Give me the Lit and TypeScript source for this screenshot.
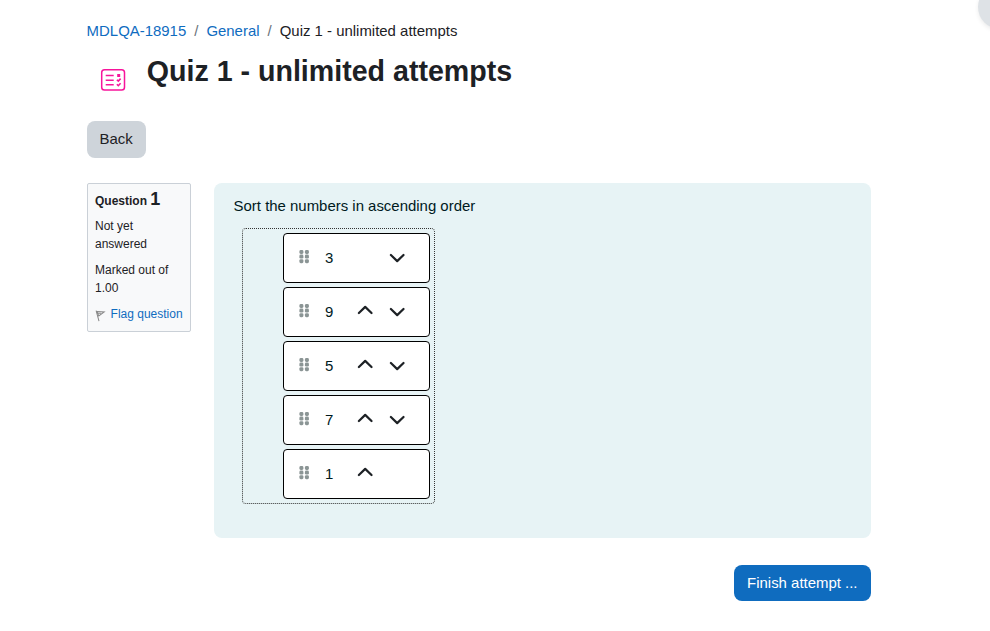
import {LitElement, html, svg, css, nothing} from 'lit';
import {customElement, property, state} from 'lit/decorators.js';

const quizIcon = svg`
  <svg width="26" height="24" viewBox="0 0 26 24" fill="none" stroke="#f7149b">
    <rect x="1.7" y="1.8" width="22.8" height="20.2" rx="2.8" stroke-width="1.5"/>
    <path d="M5.7 7.5h8M5.7 12.2h8M5.7 16.7h8" stroke-width="1.5"/>
    <rect x="17.2" y="6" width="3" height="3" fill="#f7149b" stroke="none"/>
    <path d="M16.9 11.7l1.4 1.4 2.3-2.5M16.9 16.3l1.4 1.4 2.3-2.5" stroke-width="1.6"/>
  </svg>`;

const flagIcon = svg`
  <svg width="12" height="12" viewBox="0 0 12 12" fill="none" stroke="#888" stroke-width="1.1">
    <path d="M1.2 .3L4.2 11.5"/>
    <path d="M2 1.3L9.7 1.7 4 6z"/>
    <path d="M2.4 3L6.4 3.2"/>
  </svg>`;

const gripIcon = svg`
  <svg width="10" height="14" viewBox="0 0 10 14" fill="#8b9595">
    ${[0.4, 5.9].map(x => [0, 4.6, 9.2].map(y => svg`
      <rect x=${x} y=${y} width="4" height="4" rx="1.4"/>`))}
  </svg>`;

const chevron = (d: string) => svg`
  <svg width="16" height="10" viewBox="0 0 16 10" fill="none" stroke="#1d2125"
    stroke-width="2.2" stroke-linecap="round" stroke-linejoin="round"><path d=${d}/></svg>`;

@customElement('sort-item')
export class SortItem extends LitElement {

    static styles = css`
      :host {
        display: block;
      }

      .item {
        box-sizing: border-box;
        width: 147px;
        height: 50px;
        display: grid;
        grid-template-columns: 10px 32px 32px 32px;
        align-items: center;
        padding-left: 15px;
        background: #fff;
        border: 1px solid #000;
        border-radius: 4px;
      }

      .grip {
        display: flex;
        padding-bottom: 3px;
      }

      .label {
        padding-left: 16.4px;
        line-height: 22px;
      }

      .move {
        display: flex;
        width: 100%;
        justify-content: flex-end;
        padding: 0;
        border: 0;
        background: none;
      }

      .up {
        padding-bottom: 4px;
      }
    `

    @property() label = '';
    @property({type: Boolean}) first = false;
    @property({type: Boolean}) last = false;

    move(step: number) {
        this.dispatchEvent(new CustomEvent('move', {detail: step}));
    }

    render() {
        return html`
            <div class="item">
                <span class="grip">${gripIcon}</span>
                <span class="label">${this.label}</span>
                <span>
                    ${this.first ? nothing : html`
                        <button class="move up" aria-label="Move up" @click=${() => this.move(-1)}>${chevron('M1.9 8L8.2 1.9 14.5 8')}</button>`}
                </span>
                <span>
                    ${this.last ? nothing : html`
                        <button class="move" aria-label="Move down" @click=${() => this.move(1)}>${chevron('M1.9 2L8.2 8.1 14.5 2')}</button>`}
                </span>
            </div>
        `
    }
}

@customElement('question-info')
export class QuestionInfo extends LitElement {

    static styles = css`
      .info {
        box-sizing: border-box;
        width: 104px;
        height: 149px;
        padding: 5px 7px 5px 7.4px;
        font-size: 12px;
        line-height: 18px;
        background: #f8f9fa;
        border: 1px solid #cad0d7;
        border-radius: 2px;
      }

      .number {
        margin: 0 0 6px;
        font-size: 12px;
        line-height: 20px;
      }

      .number span {
        font-size: 18px;
      }

      .info div {
        margin-bottom: 8px;
      }

      .flag {
        display: flex;
        align-items: center;
        gap: 4.2px;
        color: #0f6cbf;
        text-decoration: none;
        white-space: nowrap;
      }

      .flag svg {
        margin-top: 3px;
      }
    `

    render() {
        return html`
            <div class="info">
                <h3 class="number">Question <span>1</span></h3>
                <div>Not yet answered</div>
                <div>Marked out of 1.00</div>
                <a class="flag" href="#">${flagIcon}Flag question</a>
            </div>
        `
    }
}

@customElement('app-root')
export class AppRoot extends LitElement {

    static styles = css`
      :host {
        display: block;
        position: relative;
        box-sizing: border-box;
        height: 631px;
        padding: 20px 119px 0 86.6px;
        overflow: hidden;
        background: #fff;
        color: #1d2125;
        font-family: "Liberation Sans", Arial, sans-serif;
        font-size: 14.94px;
        line-height: 22px;
      }

      .drawer-toggle {
        position: absolute;
        top: -15px;
        right: -32px;
        width: 44px;
        height: 44px;
        border-radius: 50%;
        background: #dee2e6;
        box-shadow: 0 2px 4px rgba(0, 0, 0, .08);
      }

      .breadcrumb {
        display: flex;
        gap: 8px;
        color: #6a737b;
      }

      .breadcrumb a {
        color: #0f6cbf;
        text-decoration: none;
      }

      .current {
        color: #1d2125;
      }

      .header {
        display: flex;
        height: 79px;
      }

      .activity-icon {
        padding: 26px 20.8px 0 13.4px;
      }

      h1 {
        margin: 12px 0 0;
        font-size: 28.6px;
        line-height: 34px;
      }

      .btn {
        box-sizing: border-box;
        padding: 0 12px;
        border: 1px solid transparent;
        border-radius: 8px;
        font: inherit;
        line-height: 34px;
      }

      .back {
        height: 37px;
        padding-bottom: 1px;
        background: #ced4da;
        color: #1d2125;
      }

      .question {
        display: flex;
        gap: 23px;
        margin-top: 25px;
      }

      .formulation {
        box-sizing: border-box;
        flex: 1;
        height: 355px;
        padding: 12px 20px 0;
        border-radius: 8px;
        background: #e7f3f5;
        color: #001a1e;
      }

      .sortable {
        box-sizing: border-box;
        width: 193px;
        height: 276px;
        display: grid;
        gap: 4px;
        align-content: start;
        margin: 11px 0 0 8px;
        padding: 4px 0 0 40px;
        border: 1px dotted #333;
        border-radius: 4px;
      }

      .actions {
        display: flex;
        justify-content: flex-end;
        margin-top: 27px;
      }

      .finish {
        height: 36px;
        padding: 0 12.5px;
        background: #0f6cbf;
        color: #fff;
      }
    `

    @state() items = ['3', '9', '5', '7', '1'];

    move(index: number, step: number) {
        const items = [...this.items];
        [items[index], items[index + step]] = [items[index + step], items[index]];
        this.items = items;
    }

    render() {
        return html`
            <div class="drawer-toggle"></div>

            <nav class="breadcrumb">
                <a href="#">MDLQA-18915</a>
                <span>/</span>
                <a href="#">General</a>
                <span>/</span>
                <span class="current">Quiz 1 - unlimited attempts</span>
            </nav>

            <div class="header">
                <div class="activity-icon">${quizIcon}</div>
                <h1>Quiz 1 - unlimited attempts</h1>
            </div>

            <button class="btn back">Back</button>

            <div class="question">
                <question-info></question-info>
                <div class="formulation">
                    <div>Sort the numbers in ascending order</div>
                    <div class="sortable">
                        ${this.items.map((item, i) => html`
                            <sort-item
                                .label=${item}
                                .first=${i === 0}
                                .last=${i === this.items.length - 1}
                                @move=${(e: CustomEvent) => this.move(i, e.detail)}
                            ></sort-item>`)}
                    </div>
                </div>
            </div>

            <div class="actions">
                <button class="btn finish">Finish attempt ...</button>
            </div>
        `
    }
}
